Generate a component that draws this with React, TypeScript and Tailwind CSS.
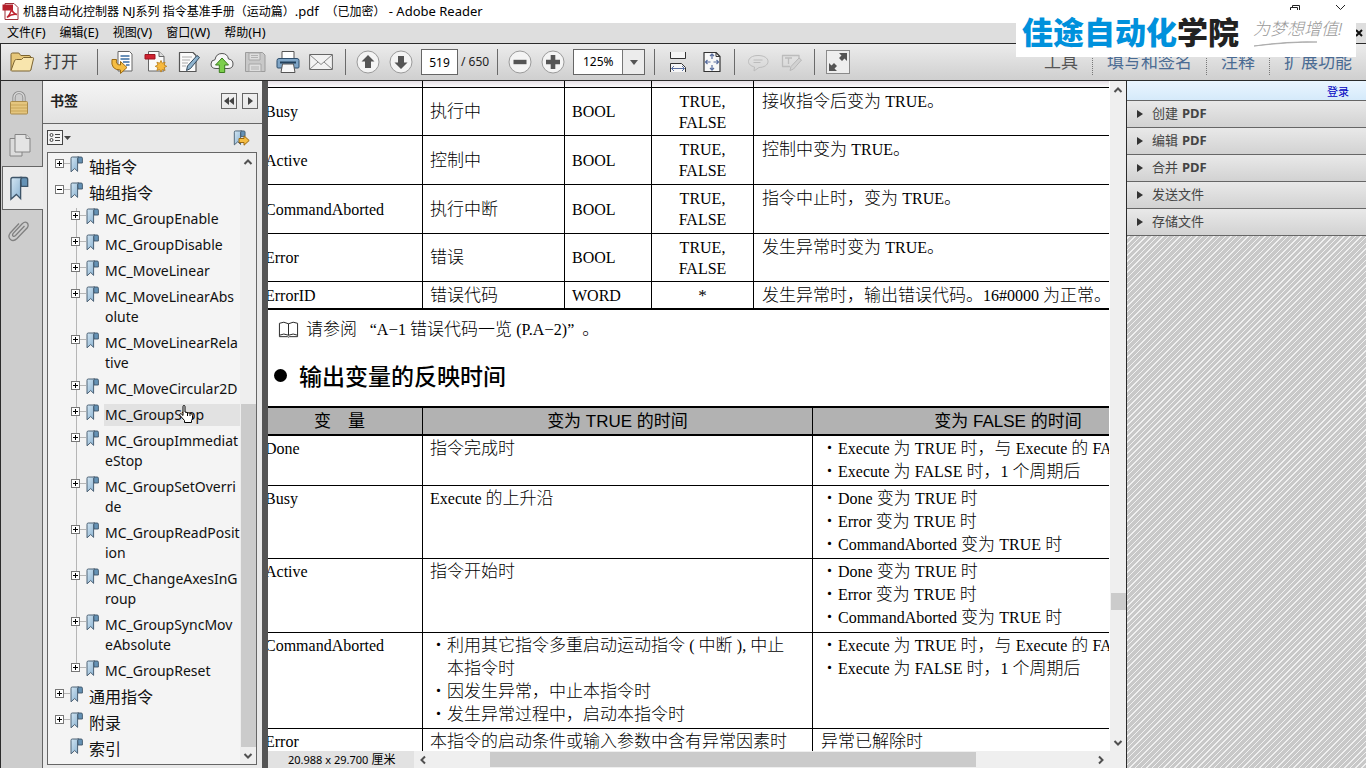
import React from "react";

const latinPattern = /([A-Za-z0-9#().,*“”_-][A-Za-z0-9#().,*“”_ -]*)/g;

function Mixed({ text }: { text: string }) {
  return (
    <>
      {text.split(latinPattern).map((part, i) =>
        i % 2 === 1 ? (
          <span key={i} className="text-[16px]">
            {part}
          </span>
        ) : (
          part
        )
      )}
    </>
  );
}

type Bookmark = { lines: string[]; level: 0 | 1; toggle: "+" | "-" | ""; active?: boolean; last?: boolean };

const bookmarks: Bookmark[] = [
  { lines: ["轴指令"], level: 0, toggle: "+" },
  { lines: ["轴组指令"], level: 0, toggle: "-" },
  { lines: ["MC_GroupEnable"], level: 1, toggle: "+" },
  { lines: ["MC_GroupDisable"], level: 1, toggle: "+" },
  { lines: ["MC_MoveLinear"], level: 1, toggle: "+" },
  { lines: ["MC_MoveLinearAbs", "olute"], level: 1, toggle: "+" },
  { lines: ["MC_MoveLinearRela", "tive"], level: 1, toggle: "+" },
  { lines: ["MC_MoveCircular2D"], level: 1, toggle: "+" },
  { lines: ["MC_GroupStop"], level: 1, toggle: "+", active: true },
  { lines: ["MC_GroupImmediat", "eStop"], level: 1, toggle: "+" },
  { lines: ["MC_GroupSetOverri", "de"], level: 1, toggle: "+" },
  { lines: ["MC_GroupReadPosit", "ion"], level: 1, toggle: "+" },
  { lines: ["MC_ChangeAxesInG", "roup"], level: 1, toggle: "+" },
  { lines: ["MC_GroupSyncMov", "eAbsolute"], level: 1, toggle: "+" },
  { lines: ["MC_GroupReset"], level: 1, toggle: "+", last: true },
  { lines: ["通用指令"], level: 0, toggle: "+" },
  { lines: ["附录"], level: 0, toggle: "+" },
  { lines: ["索引"], level: 0, toggle: "" },
];

const menus = [
  ["文件", "(F)"],
  ["编辑", "(E)"],
  ["视图", "(V)"],
  ["窗口", "(W)"],
  ["帮助", "(H)"],
];

const outputs = [
  { name: "Busy", label: "执行中", type: "BOOL", range: ["TRUE,", "FALSE"], desc: "接收指令后变为 TRUE。", h: "h-[48px]" },
  { name: "Active", label: "控制中", type: "BOOL", range: ["TRUE,", "FALSE"], desc: "控制中变为 TRUE。", h: "h-[49px]" },
  { name: "CommandAborted", label: "执行中断", type: "BOOL", range: ["TRUE,", "FALSE"], desc: "指令中止时，变为 TRUE。", h: "h-[49px]" },
  { name: "Error", label: "错误", type: "BOOL", range: ["TRUE,", "FALSE"], desc: "发生异常时变为 TRUE。", h: "h-[48px]" },
];

const timings = [
  {
    name: "Done",
    on: ["指令完成时"],
    off: ["・Execute 为 TRUE 时，与 Execute 的 FALSE 时", "・Execute 为 FALSE 时，1 个周期后"],
    h: "h-[50px]",
  },
  {
    name: "Busy",
    on: ["Execute 的上升沿"],
    off: ["・Done 变为 TRUE 时", "・Error 变为 TRUE 时", "・CommandAborted 变为 TRUE 时"],
    h: "h-[73px]",
  },
  {
    name: "Active",
    on: ["指令开始时"],
    off: ["・Done 变为 TRUE 时", "・Error 变为 TRUE 时", "・CommandAborted 变为 TRUE 时"],
    h: "h-[74px]",
  },
  {
    name: "CommandAborted",
    on: ["・利用其它指令多重启动运动指令 ( 中断 ), 中止", "　本指令时", "・因发生异常，中止本指令时", "・发生异常过程中，启动本指令时"],
    off: ["・Execute 为 TRUE 时，与 Execute 的 FALSE 时", "・Execute 为 FALSE 时，1 个周期后"],
    h: "h-[96px]",
  },
  { name: "Error", on: ["本指令的启动条件或输入参数中含有异常因素时"], off: ["异常已解除时"], h: "h-[50px]" },
];

const tools = [
  { text: "创建", pdf: true },
  { text: "编辑", pdf: true },
  { text: "合并", pdf: true },
  { text: "发送文件", pdf: false },
  { text: "存储文件", pdf: false },
];

function Ribbon({ className }: { className: string }) {
  return (
    <svg viewBox="0 0 13 17" className={className} aria-hidden="true">
      <defs>
        <linearGradient id="ribbon" x1="0" y1="0" x2="1" y2="1">
          <stop offset="0" stopColor="#d3e6f3" />
          <stop offset="1" stopColor="#86afcf" />
        </linearGradient>
      </defs>
      <path d="M7.500 1h3.600q1.300 0 1.300 1.300V7H8z" fill="#6592b5" stroke="#3d5468" strokeWidth=".9" />
      <path d="M2.300 1h6.400Q7.600 1.600 7.600 3v12.400L4.700 12.500 1 15.800V2.300Q1 1 2.300 1z" fill="url(#ribbon)" stroke="#3d5468" strokeWidth=".9" />
    </svg>
  );
}

function Toggle({ sign }: { sign: "+" | "-" }) {
  return (
    <svg viewBox="0 0 9 9" className="h-[9px] w-[9px]" aria-hidden="true">
      <rect x=".5" y=".5" width="8" height="8" fill="#fff" stroke="#777" />
      <path d={sign === "+" ? "M2 4.500h5M4.500 2v5" : "M2 4.500h5"} stroke="#000" />
    </svg>
  );
}

function BookmarkRow({ item }: { item: Bookmark }) {
  return (
    <li className="relative flex items-start pb-1">
      {item.level === 1 && (
        <span className={item.last ? "absolute left-[28px] top-0 h-2 w-px bg-[#b5b5b5]" : "absolute left-[28px] top-0 h-full w-px bg-[#b5b5b5]"} />
      )}
      <div className={item.level === 1 ? "relative flex w-[56px] shrink-0 justify-end pr-[5px]" : "relative flex w-[40px] shrink-0 justify-end pr-[5px]"}>
        {item.toggle !== "" && (
          <button aria-label={item.toggle === "+" ? "展开" : "折叠"} className="flex items-start pt-[3px]">
            <Toggle sign={item.toggle} />
            <span className="mt-1 h-px w-[6px] bg-[#b5b5b5]" />
          </button>
        )}
        <Ribbon className="h-[17px] w-[13px]" />
      </div>
      <a
        href="#"
        className={
          (item.active ? "bg-[#e2e2e2] " : "") +
          (item.level === 1 ? "text-[14px] " : "text-[16px] ") +
          "-mr-1 flex-1 whitespace-nowrap py-px pl-px leading-[20px] text-[#111]"
        }
      >
        {item.lines.map((l) => (
          <span key={l} className="block">
            {l}
          </span>
        ))}
      </a>
    </li>
  );
}

function Chevron({ d }: { d: string }) {
  return (
    <svg viewBox="0 0 10 10" className="h-[10px] w-[10px]" fill="none" stroke="#505050" strokeWidth="2" aria-hidden="true">
      <path d={d} />
    </svg>
  );
}
const UP = "M1.500 7 5 3.500 8.500 7";
const DOWN = "M1.500 3 5 6.500 8.500 3";
const LEFT = "M7 1.500 3.500 5 7 8.500";
const RIGHT = "M3 1.500 6.500 5 3 8.500";

function Sep() {
  return <span className="h-[26px] w-px shrink-0 bg-[#6a6a6a]" />;
}

function Tool({ label, children, className }: { label: string; children: React.ReactNode; className: string }) {
  return (
    <button aria-label={label} className={"flex h-[28px] shrink-0 items-center justify-center " + className}>
      <svg viewBox="0 0 24 24" className="h-6 w-6" fill="none" strokeLinejoin="round" aria-hidden="true">
        {children}
      </svg>
    </button>
  );
}

function RoundButton({ label, d }: { label: string; d: string }) {
  return (
    <Tool label={label} className="w-[33px]">
      <circle cx="12" cy="12" r="11" fill="#f4f4f4" stroke="#9a9a9a" />
      <path d={d} fill="#555" />
    </Tool>
  );
}

function Toolbar() {
  return (
    <div className="flex h-[36px] items-center overflow-hidden border-l border-[#2b2b2b] bg-linear-to-b from-[#ececec] to-[#cfcfcf]">
      <button className="flex w-[96px] shrink-0 items-center pl-[8px] text-[17px] text-[#3c3c3c]">
        <svg viewBox="0 0 26 22" className="mr-[9px] h-[22px] w-[26px]" aria-hidden="true">
          <path d="M2 19V3.500Q2 2 3.500 2h6.300l2 2.500H20q1.700 0 1.700 1.700V19z" fill="#e6c77a" stroke="#7b6330" />
          <path d="M2 19.500 5.500 9.800Q6 8.500 7.500 8.500h5l2-2h9q1.300 0 1 1.300L21.800 19q-.3 1-1.500 1H2.500z" fill="#f8e5ad" stroke="#7b6330" />
        </svg>
        打开
      </button>
      <Sep />
      <div className="flex w-[247px] shrink-0 items-center pl-[7px]">
        <Tool label="导出" className="w-[34px]">
          <path d="M8 1.500h11.500l2.500 2.500v17H8z" fill="#fff" stroke="#666" />
          <path d="M10.500 6h9M10.500 9h9M13 12h6.500M16 15h3.500" stroke="#3a6da3" strokeWidth="1.500" />
          <path d="M2 9.500h4.500q-1 5.500 4 5.500v-3.500l6.500 6-6.500 6V20Q.5 20 2 9.500z" fill="#f5bd42" stroke="#9b6a12" />
        </Tool>
        <Tool label="创建 PDF" className="w-[33px]">
          <path d="M4.500 1.500h10.500l5 5V21H4.500z" fill="#fafafa" stroke="#666" />
          <path d="M15 1.500v5h5" fill="#ddd" stroke="#666" />
          <path d="M1 4.500h10v4.500H1z" fill="#cf2230" stroke="#9c1420" />
          <path d="m17 10.500 1.300 2.700 2.800-1-1 2.800 2.700 1.300-2.700 1.300 1 2.800-2.800-1-1.300 2.700-1.300-2.700-2.800 1 1-2.800-2.700-1.300 2.700-1.300-1-2.800 2.800 1z" fill="#f8b93c" stroke="#b97c18" strokeWidth=".8" />
        </Tool>
        <Tool label="编辑" className="w-[33px]">
          <path d="M2.500 2.500H16l3 3v16H2.500z" fill="#fafafa" stroke="#555" strokeWidth="1.200" />
          <path d="M5 7h10M5 10h8M5 13h6M5 16h4" stroke="#aaa" />
          <path d="M20 5.500 22.500 7.500l-9 11-4 2 1-4.500z" fill="#8fb4cf" stroke="#344b5e" />
        </Tool>
        <Tool label="上传" className="w-[33px]">
          <path d="M6 18.500Q1 18.500 1 14q0-4 4-4.300Q6 3.500 12 3.500q5.500 0 6.500 5.500 4.500.5 4.500 5 0 4.500-5 4.500z" fill="#f6f6f6" stroke="#555" />
          <path d="m12 8 6.500 7h-3.800v7.500H9.300V15H5.500z" fill="#7ccf4c" stroke="#3c7d1f" />
        </Tool>
        <Tool label="保存" className="w-[33px]">
          <path d="M2.500 2.500h17l2.500 2.500v16.500H2.500z" fill="#c8c8c8" stroke="#9c9c9c" />
          <path d="M6 3h11v7H6zM6 14h12v7.500H6z" fill="#dedede" stroke="#a6a6a6" />
          <path d="M8 5.500h7M8 7.500h7M8 17h8M8 19h8" stroke="#b2b2b2" />
        </Tool>
        <Tool label="打印" className="w-[33px]">
          <path d="M6 1.500h12V9H6z" fill="#fff" stroke="#555" />
          <path d="M3 8.500h18q2 0 2 2V17q0 1-1 1H2q-1 0-1-1v-6.500q0-2 2-2z" fill="#7fa5c6" stroke="#2f4f6d" />
          <path d="M4 12.500h16" stroke="#23405b" strokeWidth="2" />
          <path d="M6.500 14h11l1.500 8.500H5z" fill="#f8f8f8" stroke="#555" />
        </Tool>
        <Tool label="邮件" className="w-[33px]">
          <path d="M.6 4.500h22.800v15H.6z" fill="#f2f2f2" stroke="#666" />
          <path d="m1 5 11 9.500L23 5M1 19l8-7M23 19l-8-7" stroke="#888" />
        </Tool>
      </div>
      <Sep />
      <div className="flex w-[151px] shrink-0 items-center pl-[5px]">
        <RoundButton label="上一页" d="m12 5 6.500 6.500H15V18H9v-6.500H5.500z" />
        <RoundButton label="下一页" d="m12 19 6.500-6.500H15V6H9v6.500H5.500z" />
        <input aria-label="页码" defaultValue="519" className="ml-[4px] h-[26px] w-[37px] border border-[#666] bg-white text-center text-[12px] text-black" />
        <span className="whitespace-nowrap pl-[3px] text-[12px] text-[#222]">/ 650</span>
      </div>
      <Sep />
      <div className="flex w-[156px] shrink-0 items-center pl-[5px]">
        <RoundButton label="缩小" d="M5.500 9.800h13v4.400h-13z" />
        <RoundButton label="放大" d="M9.700 5h4.600v4.700H19v4.600h-4.700V19H9.700v-4.700H5V9.700h4.700z" />
        <div className="relative ml-1 flex h-[26px] w-[72px]">
          <select aria-label="缩放" className="w-full appearance-none border border-[#666] bg-white pl-[9px] text-[12px] text-black">
            <option>125%</option>
          </select>
          <span className="pointer-events-none absolute inset-y-px right-px flex w-[22px] items-center justify-center border-l border-[#777] bg-[#ececec]">
            <svg viewBox="0 0 8 5" className="h-[5px] w-2" aria-hidden="true">
              <path d="M0 0h8L4 5z" fill="#555" />
            </svg>
          </span>
        </div>
      </div>
      <Sep />
      <div className="flex w-[79px] shrink-0 items-center pl-[6px]">
        <Tool label="适合宽度" className="w-[34px]">
          <path d="M4.500 2v6.500h15V2M4.500 22v-8.500h11l4 4V22" fill="#f6f6f6" stroke="#333" />
          <path d="M5.500 18.500h13M8 16l-2.500 2.500L8 21M16 16l2.500 2.500L16 21" stroke="#5a6fa0" />
        </Tool>
        <Tool label="适合页面" className="w-[33px]">
          <path d="M4 2.500h12l4 4v15H4z" fill="#f8f8f8" stroke="#333" strokeWidth="1.200" />
          <path d="M16 2.500v4h4" stroke="#333" />
          <path d="M12 4v5M12 15v5M5.500 12h5M13.500 12h5M10 6l2-2 2 2M10 18l2 2 2-2M7.500 10l-2 2 2 2M16.500 10l2 2-2 2" stroke="#5a6fa0" strokeWidth="1.200" />
        </Tool>
      </div>
      <Sep />
      <div className="flex w-[79px] shrink-0 items-center pl-[6px]">
        <Tool label="批注" className="w-[34px]">
          <path d="M12 5.500c6 0 10 2.500 10 6s-4 6-9 6l-5 3.500.5-4C5 16 2.500 14.500 2.500 11.500c0-3.500 4-6 9.500-6z" stroke="#bcbcbc" />
          <path d="M7.500 10h9M7.500 12.500h7" stroke="#bcbcbc" />
        </Tool>
        <Tool label="突出显示" className="w-[33px]">
          <path d="M19 10V5.500H2.500v11H10M5 8h7M8.500 8v6" stroke="#bcbcbc" strokeWidth="1.300" />
          <path d="m19 8 2.500 2-8 9-3.500 1.500 1-4z" fill="#d2d2d2" stroke="#b8b8b8" />
        </Tool>
      </div>
      <Sep />
      <button aria-label="全屏" className="ml-[11px] flex h-6 w-6 shrink-0 items-center justify-center border border-[#8a8a8a] bg-[#eee]">
        <svg viewBox="0 0 20 20" className="h-5 w-5" fill="#555" aria-hidden="true">
          <path d="M11 1h8v8l-2.500-2.500-2.500 2.500-3-3 2.500-2.500zM9 19H1v-8l2.500 2.500L6 11l3 3-2.500 2.500z" />
        </svg>
      </button>
      <div className="ml-auto flex shrink-0 items-center text-[17px] text-[#4a6b93]">
        <button className="px-[14px] text-[#555]">工具</button>
        <button className="border-l border-dotted border-[#777] px-[14px]">填写和签名</button>
        <button className="border-l border-dotted border-[#777] px-[14px]">注释</button>
        <button className="border-l border-dotted border-[#777] px-[14px]">扩展功能</button>
      </div>
    </div>
  );
}

function Brand() {
  return (
    <div className="absolute right-[10px] top-0 flex h-[57px] w-[340px] bg-white">
      <div className="flex pl-[6px] pt-[10px] text-[31px] font-black leading-[44px]">
        <span className="text-[#0091dc]">佳途自动化</span>
        <span className="text-[#222]">学院</span>
      </div>
      <div className="ml-[14px] mt-[17px] text-[17px] font-light italic leading-[24px] text-[#999]">
        为梦想增值!
        <svg viewBox="0 0 90 8" className="h-2 w-[90px]" aria-hidden="true">
          <path d="M1 5Q35 0 64 1q-28 0-63 4z" fill="#999" stroke="#aaa" strokeWidth=".8" />
        </svg>
      </div>
      <svg viewBox="0 0 60 8" className="absolute right-[8px] top-[4px] h-2 w-[60px]" fill="none" stroke="#222" aria-hidden="true">
        <path d="M2.500 6V3.500h7V6M4.500 3V1.500h7V6M48 1l4.500 4.500L57 1" />
      </svg>
    </div>
  );
}

function SideRail() {
  return (
    <nav className="flex w-[43px] shrink-0 flex-col border-l border-[#2b2b2b] bg-[#cdcdcd]">
      <button aria-label="安全" className="flex h-[43px] items-center justify-center border-r border-[#666] pr-[5px]">
        <svg viewBox="0 0 20 26" className="h-[26px] w-5" aria-hidden="true">
          <path d="M5 12V7.500a5 5 0 0 1 10 0V12" fill="none" stroke="#8a8a8a" strokeWidth="3.200" />
          <path d="M5 12V7.500a5 5 0 0 1 10 0V12" fill="none" stroke="#d8d8d8" strokeWidth="1.400" />
          <rect x="1.500" y="11.500" width="17" height="12.500" rx="1" fill="#e5c67e" stroke="#a98b4c" />
          <path d="M2 15h16M2 18h16M2 21h16" stroke="#c9a658" />
        </svg>
      </button>
      <button aria-label="页面" className="flex h-[42px] items-center justify-center border-r border-[#666] pr-[4px]">
        <svg viewBox="0 0 22 24" className="h-6 w-[22px]" fill="#dcdcdc" stroke="#858585" aria-hidden="true">
          <path d="M1 5.500h12V23H1z" />
          <path d="M6 1.500h11l4 4V19H6z" fill="#e4e4e4" />
          <path d="M17 1.500v4h4" />
        </svg>
      </button>
      <button aria-label="书签" className="ml-px flex h-[44px] items-center border-y border-l border-[#666] bg-[#ebebeb] pl-[6px]">
        <Ribbon className="h-[25px] w-[20px]" />
      </button>
      <button aria-label="附件" className="flex h-[42px] items-center justify-center border-r border-[#666] pr-[6px]">
        <svg viewBox="0 0 24 24" className="h-6 w-6" fill="none" stroke="#808080" strokeWidth="1.300" aria-hidden="true">
          <path d="m17.500 7-9 9.500q-1.500 1.500-2.500.5t.2-2.700l9-9.500Q18 2 20 3.800t.5 4.700L10 19.500Q6.500 23 3.500 20.500t-.3-6.500L12 4.500" />
        </svg>
      </button>
      <div className="flex-1 border-r border-[#666]" />
    </nav>
  );
}

function BookmarksPanel() {
  return (
    <section className="flex w-[219px] shrink-0 flex-col bg-[#e9e9e9] pb-[3px]">
      <header className="flex h-[43px] shrink-0 items-center border-b border-[#666] bg-linear-to-b from-[#f5f5f5] to-[#e2e2e2] pb-[3px] pl-[7px] pr-[4px]">
        <h2 className="flex-1 text-[14px] font-bold text-[#222]">书签</h2>
        <button aria-label="折叠面板" className="flex h-4 w-4 items-center justify-center border border-[#666]">
          <svg viewBox="0 0 10 8" className="h-2 w-[10px]" fill="#444" aria-hidden="true">
            <path d="M5 0v8L0 4zM10 0v8L5 4z" />
          </svg>
        </button>
        <button aria-label="展开面板" className="ml-[5px] flex h-4 w-4 items-center justify-center border border-[#666]">
          <svg viewBox="0 0 6 8" className="h-2 w-[6px]" fill="#444" aria-hidden="true">
            <path d="M1 0v8l5-4z" />
          </svg>
        </button>
      </header>
      <div className="flex h-[28px] shrink-0 items-center justify-between pb-px pl-[4px] pr-[12px]">
        <button aria-label="选项" className="flex items-center">
          <svg viewBox="0 0 24 15" className="h-[15px] w-6" fill="none" stroke="#444" aria-hidden="true">
            <rect x=".5" y=".5" width="15" height="14" fill="#f4f4f4" />
            <circle cx="4.500" cy="5" r="1.500" />
            <circle cx="4.500" cy="10" r="1.500" />
            <path d="M8 4.500h5M8 7.500h5M8 10.500h5" />
            <path d="M17 6h7l-3.500 4z" fill="#444" stroke="none" />
          </svg>
        </button>
        <button aria-label="查找当前书签" className="relative flex">
          <Ribbon className="h-[16px] w-[13px]" />
          <svg viewBox="0 0 12 11" className="-ml-[8px] mt-[5px] h-[11px] w-3" aria-hidden="true">
            <path d="M1 3.500h5V.8l5.200 4.700L6 10.200V7.500H1z" fill="#f5bd42" stroke="#9b6a12" />
          </svg>
        </button>
      </div>
      <div className="mx-[4px] mr-[5px] flex min-h-0 flex-1 border border-[#666] bg-[#f4f4f4]">
        <ul className="min-w-0 flex-1 pt-[3px]">
          {bookmarks.map((b) => (
            <BookmarkRow key={b.lines[0]} item={b} />
          ))}
        </ul>
        <div className="relative ml-1 flex w-[16px] flex-col items-center bg-[#eee]">
          <span className="flex h-[17px] items-center">
            <Chevron d={UP} />
          </span>
          <span className="min-h-0 flex-1" />
          <span className="h-[343px] w-[15px] bg-[#cbcbcb]" />
          <span className="flex h-[17px] items-center">
            <Chevron d={DOWN} />
          </span>
        </div>
      </div>
    </section>
  );
}

function DocumentPage() {
  const cell = "border-b border-black py-0";
  const divided = "border-b border-l border-black py-0";
  return (
    <main className="min-w-0 flex-1 overflow-hidden bg-white font-['Liberation_Serif','Noto_Sans_CJK_SC',serif] text-[17px] font-light text-black">
      <div className="-ml-[11px] w-[946px]">
        <table className="w-full table-fixed border-separate border-spacing-0 text-left leading-[21px]">
          <colgroup>
            <col className="w-[165px]" />
            <col className="w-[142px]" />
            <col className="w-[87px]" />
            <col className="w-[102px]" />
            <col />
          </colgroup>
          <tbody>
            <tr className="h-[7px] bg-linear-to-b from-[#e6e0e6] to-white text-[0px] leading-[0px]">
              <td className={cell} />
              <td className={divided} />
              <td className={divided} />
              <td className={divided} />
              <td className={divided} />
            </tr>
            {outputs.map((o) => (
              <tr key={o.name} className={o.h}>
                <td className={cell + " pl-[8px]"}>
                  <Mixed text={o.name} />
                </td>
                <td className={divided + " pl-[7px]"}>{o.label}</td>
                <td className={divided + " pl-[7px]"}>
                  <Mixed text={o.type} />
                </td>
                <td className={divided + " text-center"}>
                  <Mixed text={o.range[0]} />
                  <br />
                  <Mixed text={o.range[1]} />
                </td>
                <td className={divided + " pl-[8px] pt-[3px] align-top"}>
                  <Mixed text={o.desc} />
                </td>
              </tr>
            ))}
            <tr className="h-[28px]">
              <td className="border-b-2 border-black pl-[8px]">
                <Mixed text="ErrorID" />
              </td>
              <td className="border-b-2 border-l border-black pl-[7px]">错误代码</td>
              <td className="border-b-2 border-l border-black pl-[7px]">
                <Mixed text="WORD" />
              </td>
              <td className="border-b-2 border-l border-black text-center">*</td>
              <td className="border-b-2 border-l border-black pl-[8px]">
                <Mixed text="发生异常时，输出错误代码。16#0000 为正常。" />
              </td>
            </tr>
          </tbody>
        </table>
        <p className="flex h-[39px] items-center pl-[21px]">
          <svg viewBox="0 0 22 17" className="mr-[7px] h-[17px] w-[21px]" fill="none" stroke="#222" aria-hidden="true">
            <path d="M11 2.500Q6-.5 1.500 2v12.500Q6 12 11 14.500q5-2.500 9.500 0V2Q16-.5 11 2.500zM11 2.500v12M1.500 14.500v1.500H10l1 .5 1-.5h8.500v-1.500" />
          </svg>
          <span className="whitespace-pre">
            请参阅{"   "}
            <Mixed text="“A−1 错误代码一览 (P.A−2)”  " />。
          </span>
        </p>
        <h1 className="flex h-[57px] items-center pb-[5px] pl-[17px] font-['Noto_Sans_CJK_SC',sans-serif] text-[23px] font-medium">
          <span className="mr-[12px] h-[13px] w-[13px] rounded-full bg-black" />
          输出变量的反映时间
        </h1>
        <table className="w-full table-fixed border-separate border-spacing-0 text-left leading-[23px]">
          <colgroup>
            <col className="w-[165px]" />
            <col className="w-[390px]" />
            <col />
          </colgroup>
          <thead>
            <tr className="h-[30px] bg-[#b2b2b2] text-center font-['Liberation_Sans','Noto_Sans_CJK_SC',sans-serif]">
              <th className="border-y-2 border-black p-0 font-normal">变　量</th>
              <th className="border-y-2 border-l border-black p-0 font-normal">变为 TRUE 的时间</th>
              <th className="border-y-2 border-l border-black p-0 font-normal">变为 FALSE 的时间</th>
            </tr>
          </thead>
          <tbody>
            {timings.map((t) => (
              <tr key={t.name} className={t.h + " align-top whitespace-nowrap"}>
                <td className="border-b border-black p-0 pl-[8px] pt-px">
                  <Mixed text={t.name} />
                </td>
                <td className="border-b border-l border-black p-0 pl-[7px] pt-px">
                  {t.on.map((l) => (
                    <div key={l}>
                      <Mixed text={l} />
                    </div>
                  ))}
                </td>
                <td className="border-b border-l border-black p-0 pl-[8px] pt-px">
                  {t.off.map((l) => (
                    <div key={l}>
                      <Mixed text={l} />
                    </div>
                  ))}
                </td>
              </tr>
            ))}
          </tbody>
        </table>
      </div>
    </main>
  );
}

export default function App() {
  return (
    <div className="relative flex h-screen flex-col overflow-hidden bg-white font-['Noto_Sans','Noto_Sans_CJK_SC',sans-serif] text-[12px] text-black">
      <div className="flex h-[23px] shrink-0 items-center pl-[2px]">
        <svg viewBox="0 0 17 17" className="mr-[4px] h-[17px] w-[17px]" aria-hidden="true">
          <path d="M3 .5h9l4 4v12H3z" fill="#fff" stroke="#9b3038" />
          <path d="M.5 1.500H11v6H.5z" fill="#b51f2b" />
          <path d="M5 14.500q4-4 4.500-9 1 5 5.500 6-5-1-10 3z" fill="none" stroke="#c02531" strokeWidth="1.500" />
        </svg>
        <span className="whitespace-pre">
          机器自动化控制器 <span className="text-[13px]">NJ</span>系列 指令基准手册（运动篇）
          <span className="text-[13px]">.pdf  </span>（已加密）
          <span className="text-[13px]"> - Adobe Reader</span>
        </span>
      </div>
      <div className="flex h-[20px] shrink-0 items-center gap-[14px] bg-[#dedede] pl-[7px]">
        {menus.map(([name, key]) => (
          <button key={name}>
            {name}
            <span className="text-[13px]">{key}</span>
          </button>
        ))}
        <button aria-label="关闭文档" className="ml-auto mr-[3px]">
          <svg viewBox="0 0 8 8" className="h-2 w-2" stroke="#111" strokeWidth="2" aria-hidden="true">
            <path d="m1 1 6 6M7 1 1 7" />
          </svg>
        </button>
      </div>
      <div className="shrink-0 border-y border-[#2b2b2b]">
        <Toolbar />
      </div>
      <Brand />
      <div className="flex min-h-0 flex-1">
        <SideRail />
        <BookmarksPanel />
        <div className="flex w-[6px] shrink-0 items-center justify-end bg-[#555]">
          <span className="mb-[40px] h-[48px] w-[4px] bg-[radial-gradient(#ddd_40%,transparent_45%)] bg-size-[2px_2px]" />
        </div>
        <div className="flex min-w-0 flex-1 flex-col bg-[#efefef]">
          <div className="flex min-h-0 flex-1">
            <DocumentPage />
            <div className="flex w-[17px] shrink-0 flex-col items-center border-l border-white bg-[#efefef]">
              <span className="flex h-[17px] items-center">
                <Chevron d={UP} />
              </span>
              <span className="grow-[494]" />
              <span className="h-[17px] w-[15px] bg-[#cbcbcb]" />
              <span className="grow-[124]" />
              <span className="flex h-[17px] items-center">
                <Chevron d={DOWN} />
              </span>
            </div>
          </div>
          <div className="flex h-[17px] shrink-0 items-center">
            <span className="h-full w-[146px] bg-[#e2e2e2] pl-[20px] text-[12px] leading-[17px]">
              <span className="text-[11px]">20.988 x 29.700</span> 厘米
            </span>
            <span className="flex w-[17px] justify-center">
              <Chevron d={LEFT} />
            </span>
            <span className="grow-[59]" />
            <span className="h-[15px] w-[486px] bg-[#cbcbcb]" />
            <span className="grow-[117]" />
            <span className="mr-[17px] flex w-[17px] justify-center">
              <Chevron d={RIGHT} />
            </span>
          </div>
        </div>
        <aside className="flex w-[240px] shrink-0 flex-col border-l border-[#2b2b2b] bg-[repeating-linear-gradient(135deg,#c8c8c8_0px,#c8c8c8_3px,#f0f0f0_3px,#f0f0f0_4px)]">
          <div className="flex h-[20px] items-center justify-end border-b border-[#666] bg-linear-to-b from-[#eaf5ff] to-[#d5eafa] pr-[17px] pt-[3px]">
            <a href="#" className="text-[11px] text-[#0000c0]">
              登录
            </a>
          </div>
          {tools.map((t) => (
            <button
              key={t.text}
              className="flex h-[27px] items-center border-b border-[#666] bg-linear-to-b from-[#e9e9e9] to-[#d2d2d2] pl-[10px] text-[13px] text-[#444]"
            >
              <svg viewBox="0 0 6 8" className="mr-[9px] h-2 w-[6px]" aria-hidden="true">
                <path d="M0 0v8l6-4z" fill="#333" />
              </svg>
              {t.text}
              {t.pdf && <b className="pl-1">PDF</b>}
            </button>
          ))}
        </aside>
      </div>
      <svg viewBox="0 0 14 18" className="pointer-events-none absolute left-[179px] top-[405px] h-[18px] w-[14px]" aria-hidden="true">
        <path
          d="M4 1.500q0-1 1-1t1 1V7l6 1.500q1.500.5 1.500 2V13q0 1-1 2.500v2H5.500v-2L1 10.500q-.8-1.500.3-1.800 1-.2 2.700 1.800z"
          fill="#fff"
          stroke="#000"
        />
        <path d="M8.500 8v3M11 8.500V11" stroke="#000" />
      </svg>
    </div>
  );
}
